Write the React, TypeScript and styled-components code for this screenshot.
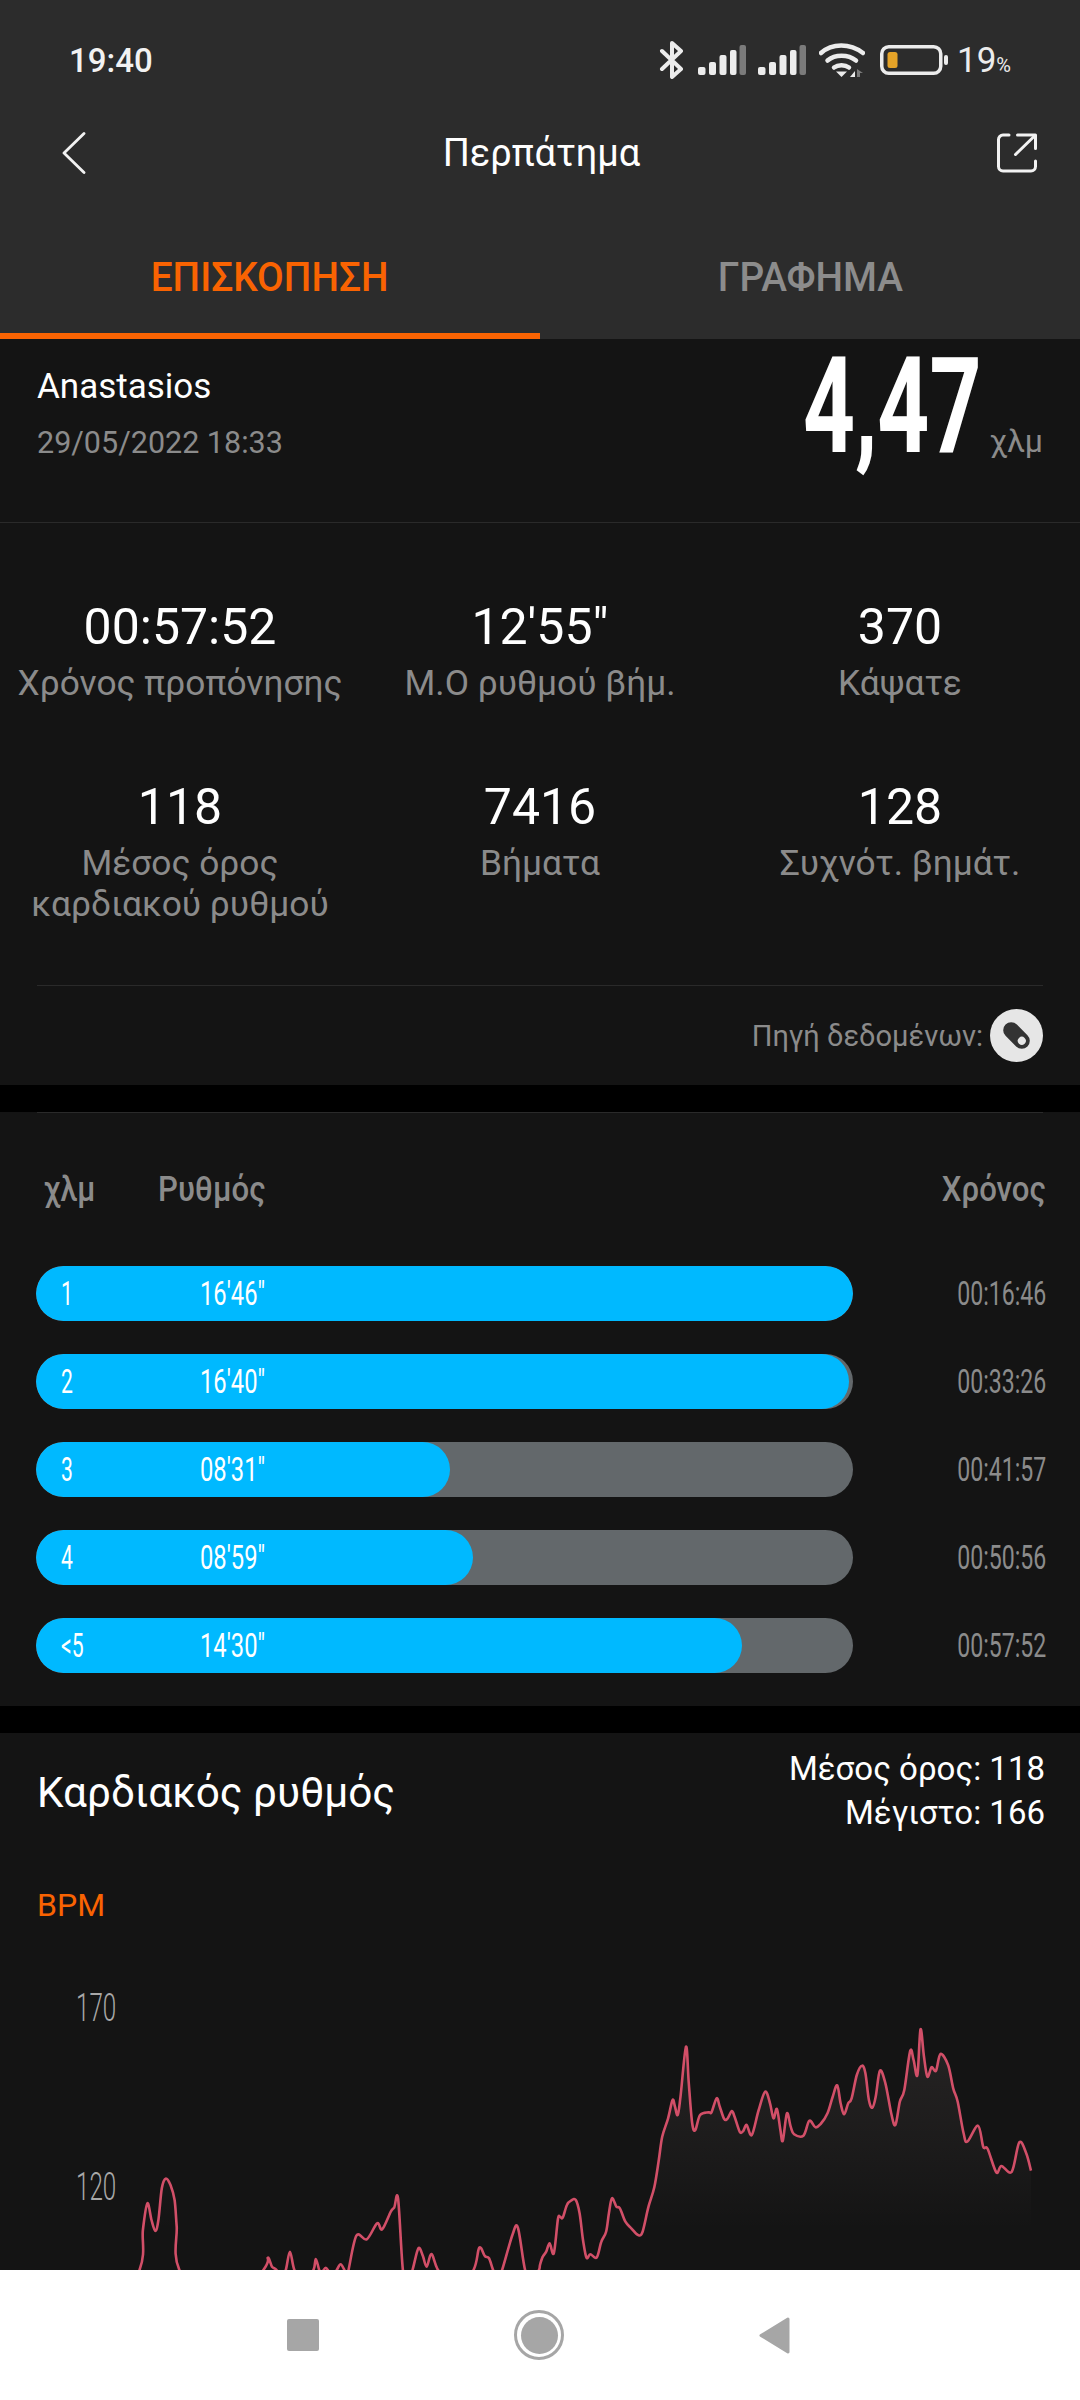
import styled, { createGlobalStyle } from "styled-components"

const GlobalStyle = createGlobalStyle`
  html, body {
    margin: 0;
    padding: 0;
    background: #000;
    font-family: Roboto, "Noto Sans", sans-serif;
  }
`

const Page = styled.div`
  width: 1080px;
  height: 2400px;
  overflow: hidden;
  display: flex;
  flex-direction: column;
  background: #000;
`

/* the app's numerals are a condensed face, none installed, so squeeze Roboto */
const Narrow = styled.span<{ $x: number; $origin?: string }>`
  display: inline-block;
  white-space: nowrap;
  transform: scaleX(${(p) => p.$x});
  transform-origin: ${(p) => p.$origin ?? "left"} center;
`

const Header = styled.header`
  background: #2c2c2c;
  color: #fff;
`

const StatusBar = styled.div`
  height: 120px;
  padding: 0 69px;
  box-sizing: border-box;
  display: flex;
  align-items: center;
  justify-content: space-between;
`

const Clock = styled.span`
  font-size: 33px;
  font-weight: 500;
  color: #f2f2f2;
`

const StatusIcons = styled.div`
  display: flex;
  align-items: center;
`

const BatteryText = styled.span`
  font-size: 35px;
  color: #ececec;
  margin-left: 9px;
  small {
    font-size: 20px;
  }
`

const NavRow = styled.div`
  height: 66px;
  padding: 0 43px 0 62px;
  display: flex;
  align-items: center;
  justify-content: space-between;
`

const NavTitle = styled.span`
  font-size: 38px;
`

const Tabs = styled.div`
  display: grid;
  grid-template-columns: 1fr 1fr;
`

const Tab = styled.div<{ $active?: boolean }>`
  height: 153px;
  box-sizing: border-box;
  padding-top: 66px;
  display: flex;
  justify-content: center;
  line-height: 52px;
  font-size: 40px;
  font-weight: 500;
  color: ${(p) => (p.$active ? "#f96302" : "#8c8c8c")};
  border-bottom: 6px solid ${(p) => (p.$active ? "#f96302" : "transparent")};
`

const Card = styled.section`
  background: #141414;
`

const Summary = styled.div`
  height: 184px;
  box-sizing: border-box;
  padding: 27px 37px 0;
  display: flex;
  justify-content: space-between;
  border-bottom: 1px solid #2a2a2a;
`

const Person = styled.div`
  display: flex;
  flex-direction: column;
`

const PersonName = styled.span`
  font-size: 35px;
  line-height: 42px;
  color: #fff;
`

const WhenText = styled.span`
  margin-top: 14px;
  font-size: 30.500px;
  line-height: 42px;
  color: #8b8b8b;
`

const Distance = styled.div`
  display: flex;
  align-items: flex-start;
  margin-top: -39px;
`

const DistanceValue = styled.span`
  font-size: 134px;
  line-height: 160px;
  font-weight: 700;
  color: #fff;
`

const DistanceUnit = styled.span`
  font-size: 32px;
  line-height: 40px;
  margin: 94px 0 0 8px;
  color: #8b8b8b;
`

const StatsGrid = styled.div`
  display: grid;
  grid-template-columns: repeat(3, 360px);
  grid-auto-rows: 180px;
  padding-top: 76px;
  height: 462px;
  box-sizing: border-box;
`

const Stat = styled.div`
  display: flex;
  flex-direction: column;
  align-items: center;
  text-align: center;
`

const StatValue = styled.span`
  font-size: 50px;
  line-height: 56px;
  color: #fff;
`

const StatLabel = styled.span`
  margin-top: 8px;
  font-size: 35.300px;
  line-height: 41px;
  color: #8b8b8b;
`

const Rule = styled.div`
  height: 1px;
  margin: 0 37px;
  background: #2a2a2a;
`

const SourceRow = styled.div`
  height: 99px;
  padding: 0 37px;
  display: flex;
  align-items: center;
  justify-content: flex-end;
  gap: 7px;
  font-size: 29px;
  color: #8b8b8b;
`

const Splits = styled(Card)`
  margin-top: 27px;
  height: 594px;
  display: flex;
  flex-direction: column;
`

const SplitsHead = styled.div`
  height: 124px;
  box-sizing: border-box;
  padding: 28px 34px 0 44px;
  display: flex;
  align-items: center;
  font-size: 35px;
  font-weight: 500;
  color: #8b8b8b;
`

const KmHead = styled.span`
  width: 114px;
`

const PaceHead = styled.span`
  flex: 1;
`

const SplitRows = styled.div`
  display: flex;
  flex-direction: column;
  gap: 33px;
  padding: 29px 34px 0 36px;
`

const SplitRow = styled.div`
  display: flex;
  align-items: center;
  justify-content: space-between;
`

const Track = styled.div`
  width: 817px;
  height: 55px;
  border-radius: 28px;
  background: #63686b;
  overflow: hidden;
`

const Fill = styled.div`
  height: 100%;
  border-radius: 28px;
  background: #00b9ff;
  display: flex;
  align-items: center;
  padding-left: 25px;
  box-sizing: border-box;
  font-size: 33px;
  color: #fff;
`

const KmCell = styled.span`
  width: 139px;
`

const SplitTime = styled.span`
  font-size: 33px;
  color: #8b8b8b;
`

const Heart = styled(Card)`
  margin-top: 27px;
  flex: 1;
  display: flex;
  flex-direction: column;
  min-height: 0;
`

const HeartHead = styled.div`
  padding: 14px 35px 0 37px;
  display: flex;
  justify-content: space-between;
  height: 102px;
`

const HeartTitle = styled.span`
  margin-top: 21px;
  font-size: 42.300px;
  line-height: 50px;
  color: #fff;
`

const HeartNumbers = styled.div`
  display: flex;
  flex-direction: column;
  align-items: flex-end;
  font-size: 33px;
  line-height: 44px;
  color: #fff;
`

const BpmLabel = styled.div`
  padding: 0 37px;
  margin: 36px 0 13px;
  font-size: 32px;
  line-height: 40px;
  color: #f96302;
`

const ChartArea = styled.div`
  position: relative;
  flex: 1;
  min-height: 0;
  overflow: hidden;
  padding: 44px 0 0 76px;
  display: flex;
  flex-direction: column;
  gap: 127px;
`

const AxisLabel = styled.span`
  font-size: 39px;
  line-height: 52px;
  font-weight: 300;
  color: #a8a8a8;
`

const ChartSvg = styled.svg`
  position: absolute;
  left: 0;
  top: 0;
  width: 1080px;
  height: 332px;
`

const NavBar = styled.nav`
  height: 130px;
  flex: none;
  background: #fff;
  display: flex;
  align-items: center;
  padding-left: 287px;
  gap: 195px;
`

const StopButton = styled.div`
  width: 32px;
  height: 32px;
  border-radius: 2px;
  background: #a6a6a6;
`

const HomeButton = styled.div`
  width: 50px;
  height: 50px;
  box-sizing: border-box;
  border-radius: 50%;
  border: 3.5px solid #a6a6a6;
  padding: 3.5px;
  &::after {
    content: "";
    display: block;
    width: 100%;
    height: 100%;
    border-radius: 50%;
    background: #a6a6a6;
  }
`

const splits = [
  { km: "1", pace: "16'46\"", time: "00:16:46", pct: 100 },
  { km: "2", pace: "16'40\"", time: "00:33:26", pct: 99.5 },
  { km: "3", pace: "08'31\"", time: "00:41:57", pct: 50.7 },
  { km: "4", pace: "08'59\"", time: "00:50:56", pct: 53.5 },
  { km: "<5", pace: "14'30\"", time: "00:57:52", pct: 86.4 },
]

const stats = [
  { value: "00:57:52", label: "Χρόνος προπόνησης" },
  { value: "12'55\"", label: "Μ.Ο ρυθμού βήμ." },
  { value: "370", label: "Κάψατε" },
  { value: "118", label: "Μέσος όρος\nκαρδιακού ρυθμού" },
  { value: "7416", label: "Βήματα" },
  { value: "128", label: "Συχνότ. βημάτ." },
]

// traced from the reference, x/y as read off the two chart crops
const leftTrace = [
  [300, 1150], [405, 960], [415, 840], [428, 760], [440, 810], [451, 843], [460, 810], [470, 715], [481, 686], [495, 705],
  [507, 750], [513, 830], [521, 960], [640, 1120], [765, 960], [778, 923], [790, 950], [803, 960], [816, 990], [830, 960],
  [842, 905], [855, 960], [880, 1000], [910, 960], [917, 927], [927, 960], [934, 975], [940, 960], [946, 953], [952, 960],
  [965, 985], [978, 960], [989, 943], [1000, 960], [1006, 975], [1012, 960], [1035, 857], [1065, 868], [1095, 820],
  [1110, 838], [1135, 785], [1145, 772], [1156, 746], [1170, 960], [1184, 1000], [1198, 960], [1215, 895], [1228, 918],
  [1239, 950], [1253, 912], [1272, 960], [1320, 1030], [1375, 960], [1392, 893], [1408, 918], [1420, 925], [1432, 960],
  [1445, 985], [1458, 960], [1488, 855], [1504, 833], [1525, 960], [1545, 990], [1565, 960],
]

const rightTrace = [
  [0, 945], [8, 920], [18, 905], [28, 880], [40, 910], [52, 808], [58, 800], [66, 803], [78, 765], [90, 752], [104, 750],
  [115, 790], [125, 870], [135, 923], [146, 913], [165, 922], [178, 875], [192, 845], [200, 790], [209, 745], [222, 770],
  [232, 775], [248, 815], [265, 835], [285, 855], [298, 845], [315, 770], [332, 712], [345, 630], [355, 560], [372, 505],
  [385, 450], [392, 470], [400, 495], [408, 440], [424, 290], [432, 400], [442, 520], [451, 540], [465, 495], [490, 487],
  [498, 487], [513, 445], [522, 470], [535, 507], [545, 505], [557, 483], [565, 500], [580, 545], [590, 543], [600, 525],
  [615, 555], [635, 480], [654, 425], [668, 460], [678, 505], [688, 477], [698, 540], [705, 572], [717, 490], [728, 530],
  [738, 553], [765, 557], [782, 512], [800, 532], [815, 522], [835, 490], [850, 440], [863, 406], [873, 460], [883, 493],
  [895, 460], [905, 445], [920, 375], [935, 347], [945, 370], [955, 450], [965, 473], [975, 440], [987, 362], [1003, 400],
  [1020, 490], [1032, 525], [1045, 455], [1058, 420], [1075, 303], [1085, 330], [1096, 375], [1105, 238], [1115, 320],
  [1125, 380], [1137, 352], [1150, 362], [1163, 312], [1185, 345], [1200, 415], [1213, 455], [1230, 550], [1241, 575],
  [1272, 527], [1287, 590], [1300, 597], [1325, 667], [1340, 648], [1370, 665], [1392, 577], [1412, 610], [1426, 662],
]

const chartTop = 1938
const toPage = (xOffset: number) => ([x, y]: number[]) => [xOffset + x / 2.904, 1950 + y / 3 - chartTop]
const tracePoints = [...leftTrace.map(toPage(0)), ...rightTrace.map(toPage(540))]

const smoothPath = (pts: number[][]) => {
  let d = `M${pts[0][0].toFixed(1)} ${pts[0][1].toFixed(1)}`
  for (let i = 0; i < pts.length - 1; i++) {
    const p0 = pts[Math.max(i - 1, 0)]
    const p1 = pts[i]
    const p2 = pts[i + 1]
    const p3 = pts[Math.min(i + 2, pts.length - 1)]
    const c1x = p1[0] + (p2[0] - p0[0]) / 6
    const c1y = p1[1] + (p2[1] - p0[1]) / 6
    const c2x = p2[0] - (p3[0] - p1[0]) / 6
    const c2y = p2[1] - (p3[1] - p1[1]) / 6
    d += `C${c1x.toFixed(1)} ${c1y.toFixed(1)} ${c2x.toFixed(1)} ${c2y.toFixed(1)} ${p2[0].toFixed(1)} ${p2[1].toFixed(1)}`
  }
  return d
}

const linePath = smoothPath(tracePoints)
const lastX = tracePoints[tracePoints.length - 1][0]
const areaPath = `${linePath}L${lastX.toFixed(1)} 400L100 400Z`

const Bluetooth = () => (
  <svg width="26" height="38" viewBox="0 0 26 38" style={{ marginRight: 13 }}>
    <path d="M3 10l19 18-9 8V2l9 8L3 28" fill="none" stroke="#ececec" strokeWidth="4" strokeLinejoin="round" strokeLinecap="round" />
  </svg>
)

const Signal = ({ gap }: { gap: number }) => (
  <svg width="48" height="30" viewBox="0 0 48 30" style={{ marginRight: gap }}>
    <rect x="0" y="22" width="7.5" height="8" rx="2" fill="#ececec" />
    <rect x="11" y="17" width="7" height="13" rx="2" fill="#ececec" />
    <rect x="21.5" y="10" width="7" height="20" rx="2" fill="#ececec" />
    <rect x="32" y="5" width="6.5" height="25" rx="2" fill="#ececec" />
    <rect x="41.5" y="0" width="6.5" height="30" rx="2" fill="#7b7b7b" />
  </svg>
)

const Wifi = () => (
  <svg width="46" height="36" viewBox="0 0 46 36" style={{ marginRight: 15 }}>
    <g fill="none" stroke="#ececec" strokeWidth="4.5" strokeLinecap="round">
      <path d="M2 11C13 1 31 1 44 11" />
      <path d="M8.5 18.5C16 12 29 12 37 18.5" />
      <path d="M15 25.500C19 22.500 26 22.500 30 25.500" />
    </g>
    <path d="M17 29.500h11l-5.500 5.500z" fill="#ececec" />
    <path d="M31 35l5-6v6z" fill="#ececec" />
    <path d="M38 35v-8l6 4h-3v4z" fill="#7b7b7b" />
  </svg>
)

const Battery = () => (
  <svg width="68" height="30" viewBox="0 0 68 30">
    <rect x="1.750" y="1.750" width="59" height="26.500" rx="7" fill="none" stroke="#ececec" strokeWidth="3.500" />
    <rect x="7.500" y="7" width="10" height="16" rx="2.500" fill="#e5a328" />
    <rect x="64" y="10" width="4" height="10" rx="2" fill="#ececec" />
  </svg>
)

const BackIcon = () => (
  <svg width="24" height="42" viewBox="0 0 24 42">
    <path d="M22 1.500L2 21l20 19.500" fill="none" stroke="#f2f2f2" strokeWidth="2.800" strokeLinecap="round" strokeLinejoin="round" />
  </svg>
)

const ShareIcon = () => (
  <svg width="40" height="40" viewBox="0 0 40 40">
    <g fill="none" stroke="#f2f2f2" strokeWidth="3" strokeLinecap="round" strokeLinejoin="round">
      <path d="M12 2H6a4.500 4.500 0 0 0-4.500 4.500v27A4.500 4.500 0 0 0 6 38h28a4.500 4.500 0 0 0 4.500-4.500V28" />
      <path d="M20.500 2h18v13.500" />
      <path d="M37 3.500L18.500 21.500" />
    </g>
  </svg>
)

const SourceIcon = () => (
  <svg width="53" height="53" viewBox="0 0 53 53">
    <circle cx="26.500" cy="26.500" r="26.500" fill="#e6e6e6" />
    <g transform="rotate(45 26.500 26.500)">
      <rect x="11" y="18.500" width="31" height="16" rx="8" fill="#333" />
      <circle cx="34" cy="26.500" r="4" fill="#e6e6e6" />
    </g>
  </svg>
)

const BackTriangle = () => (
  <svg width="31" height="37" viewBox="0 0 31 37">
    <path d="M29 2L2 18.500 29 35z" fill="#a6a6a6" stroke="#a6a6a6" strokeWidth="3" strokeLinejoin="round" />
  </svg>
)

export default function App() {
  return (
    <Page>
      <GlobalStyle />
      <Header>
        <StatusBar>
          <Clock>19:40</Clock>
          <StatusIcons>
            <Bluetooth />
            <Signal gap={12} />
            <Signal gap={13} />
            <Wifi />
            <Battery />
            <BatteryText>
              19<small>%</small>
            </BatteryText>
          </StatusIcons>
        </StatusBar>
        <NavRow>
          <BackIcon />
          <NavTitle>Περπάτημα</NavTitle>
          <ShareIcon />
        </NavRow>
        <Tabs>
          <Tab $active>
            <Narrow $x={0.97} $origin="center">ΕΠΙΣΚΟΠΗΣΗ</Narrow>
          </Tab>
          <Tab>
            <Narrow $x={0.97} $origin="center">ΓΡΑΦΗΜΑ</Narrow>
          </Tab>
        </Tabs>
      </Header>

      <Card>
        <Summary>
          <Person>
            <PersonName>Anastasios</PersonName>
            <WhenText>29/05/2022 18:33</WhenText>
          </Person>
          <Distance>
            <DistanceValue>
              <Narrow $x={0.678} $origin="right">4,47</Narrow>
            </DistanceValue>
            <DistanceUnit>χλμ</DistanceUnit>
          </Distance>
        </Summary>
        <StatsGrid>
          {stats.map((s) => (
            <Stat key={s.value}>
              <StatValue>{s.value}</StatValue>
              <StatLabel>
                {s.label.split("\n").map((line) => (
                  <div key={line}>{line}</div>
                ))}
              </StatLabel>
            </Stat>
          ))}
        </StatsGrid>
        <Rule />
        <SourceRow>
          Πηγή δεδομένων:
          <SourceIcon />
        </SourceRow>
      </Card>

      <Splits>
        <Rule />
        <SplitsHead>
          <KmHead>
            <Narrow $x={0.87}>χλμ</Narrow>
          </KmHead>
          <PaceHead>
            <Narrow $x={0.89}>Ρυθμός</Narrow>
          </PaceHead>
          <Narrow $x={0.89} $origin="right">Χρόνος</Narrow>
        </SplitsHead>
        <SplitRows>
          {splits.map((s) => (
            <SplitRow key={s.km}>
              <Track>
                <Fill style={{ width: `${s.pct}%` }}>
                  <KmCell>
                    <Narrow $x={0.64}>{s.km}</Narrow>
                  </KmCell>
                  <Narrow $x={0.72}>{s.pace}</Narrow>
                </Fill>
              </Track>
              <SplitTime>
                <Narrow $x={0.7} $origin="right">{s.time}</Narrow>
              </SplitTime>
            </SplitRow>
          ))}
        </SplitRows>
      </Splits>

      <Heart>
        <HeartHead>
          <HeartTitle>Καρδιακός ρυθμός</HeartTitle>
          <HeartNumbers>
            <span>Μέσος όρος: 118</span>
            <span>Μέγιστο: 166</span>
          </HeartNumbers>
        </HeartHead>
        <BpmLabel>BPM</BpmLabel>
        <ChartArea>
          <AxisLabel>
            <Narrow $x={0.62}>170</Narrow>
          </AxisLabel>
          <AxisLabel>
            <Narrow $x={0.62}>120</Narrow>
          </AxisLabel>
          <ChartSvg viewBox="0 0 1080 332">
            <defs>
              <linearGradient id="hrFill" x1="0" y1="96" x2="0" y2="292" gradientUnits="userSpaceOnUse">
                <stop offset="0" stopColor="#ffdede" stopOpacity="0.08" />
                <stop offset="1" stopColor="#ffdede" stopOpacity="0" />
              </linearGradient>
            </defs>
            <path d={areaPath} fill="url(#hrFill)" />
            <path d={linePath} fill="none" stroke="#d24f68" strokeWidth="2.600" strokeLinejoin="round" />
          </ChartSvg>
        </ChartArea>
      </Heart>

      <NavBar>
        <StopButton />
        <HomeButton />
        <BackTriangle />
      </NavBar>
    </Page>
  )
}
